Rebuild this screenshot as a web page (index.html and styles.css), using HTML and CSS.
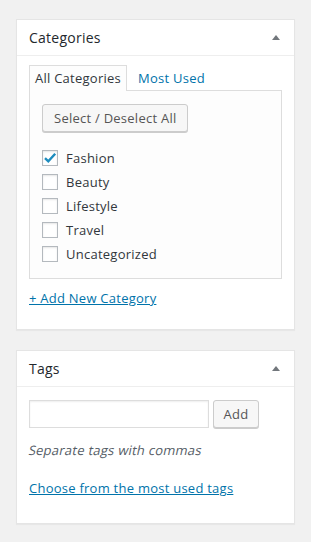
FILE: index.html
```html
<!DOCTYPE html>
<html lang="en">
<head>
  <meta charset="UTF-8" />
  <meta name="viewport" content="width=device-width, initial-scale=1.0" />
  <title>Post Boxes</title>
  <link rel="stylesheet" href="styles.css">
</head>
<body>
  <div class="postbox">
    <div class="hndle">
      <h2>Categories</h2>
      <svg class="toggle" width="8" height="5" viewBox="0 0 8 5"><polygon points="0,5 8,5 4,0" fill="#72777c"/></svg>
    </div>
    <div class="inside">
      <ul class="tabs">
        <li class="tab active">All Categories</li>
        <li class="tab"><a href="#">Most Used</a></li>
      </ul>
      <div class="panel">
        <button class="button">Select / Deselect All</button>
        <ul class="checklist">
          <li><span class="check checked"><svg width="14" height="14" viewBox="0 0 14 14"><path d="M2 7.2 L5.3 10.4 L12.2 2.8" fill="none" stroke="#1e8cbe" stroke-width="2.4"/></svg></span>Fashion</li>
          <li><span class="check"></span>Beauty</li>
          <li><span class="check"></span>Lifestyle</li>
          <li><span class="check"></span>Travel</li>
          <li><span class="check"></span>Uncategorized</li>
        </ul>
      </div>
      <a class="add-link" href="#">+ Add New Category</a>
    </div>
  </div>

  <div class="postbox">
    <div class="hndle">
      <h2>Tags</h2>
      <svg class="toggle" width="8" height="5" viewBox="0 0 8 5"><polygon points="0,5 8,5 4,0" fill="#72777c"/></svg>
    </div>
    <div class="inside tags">
      <div class="tag-row">
        <input type="text" class="tag-input" />
        <button class="button">Add</button>
      </div>
      <p class="howto"><span>Separate tags with commas</span></p>
      <a class="cloud-link" href="#">Choose from the most used tags</a>
    </div>
  </div>
</body>
</html>
```

FILE: styles.css
```css
body {
  font-family: "Open Sans", sans-serif;
  font-size: 13px;
  letter-spacing: 0.25px;
  margin: 0;
  padding: 19px 16px;
  background: #f1f1f1;
  color: #32373c;
}
.postbox {
  background: #fff;
  border: 1px solid #e5e5e5;
  box-shadow: 0 1px 1px rgba(0,0,0,0.04);
  margin-bottom: 20px;
}
.hndle {
  height: 35px;
  display: flex;
  align-items: center;
  justify-content: space-between;
  padding: 0 14px 0 12px;
  border-bottom: 1px solid #eee;
}
.hndle h2 {
  margin: 0;
  font-size: 14px;
  font-weight: 400;
  color: #23282d;
}
.inside {
  padding: 9px 12px 21px;
}
.tabs {
  list-style: none;
  margin: 0;
  padding: 0;
  display: flex;
  gap: 5px;
}
.tab {
  height: 25px;
  line-height: 24px;
  padding: 0 5px;
  border: 1px solid transparent;
  border-bottom: none;
  margin-bottom: -1px;
  position: relative;
}
.tab.active {
  border-color: #ddd;
  background: #fdfdfd;
  color: #32373c;
}
a {
  color: #0073aa;
  text-decoration: none;
}
.panel {
  border: 1px solid #ddd;
  background: #fdfdfd;
  padding: 13px 12px 12px;
}
.button {
  font-family: "Open Sans", sans-serif;
  font-size: 13px;
  letter-spacing: 0.25px;
  height: 28px;
  padding: 0 11px;
  color: #555;
  background: #f7f7f7;
  border: 1px solid #ccc;
  border-radius: 3px;
  box-shadow: 0 1px 0 #ccc;
}
.checklist {
  list-style: none;
  margin: 14px 0 0;
  padding: 0;
}
.checklist li {
  height: 24px;
  display: flex;
  align-items: center;
}
.check {
  width: 14px;
  height: 14px;
  border: 1px solid #b4b9be;
  background: #fff;
  box-shadow: inset 0 1px 2px rgba(0,0,0,0.1);
  margin-right: 8px;
  display: flex;
  align-items: center;
  justify-content: center;
}
.add-link {
  display: inline-block;
  margin-top: 9px;
  line-height: 20px;
  text-decoration: underline;
}
.tags {
  padding: 13px 12px 25px;
}
.tag-row {
  display: flex;
  gap: 4px;
}
.tag-input {
  width: 180px;
  height: 28px;
  box-sizing: border-box;
  border: 1px solid #ddd;
  box-shadow: inset 0 1px 2px rgba(0,0,0,0.07);
  margin: 0;
}
.tags .button {
  width: 46px;
  padding: 0;
}
.howto {
  margin: 12px 0 18px;
  line-height: 20px;
  color: #555d66;
}
.howto span {
  display: inline-block;
  transform: skewX(-12deg);
}
.cloud-link {
  display: inline-block;
  line-height: 20px;
  text-decoration: underline;
}
```
